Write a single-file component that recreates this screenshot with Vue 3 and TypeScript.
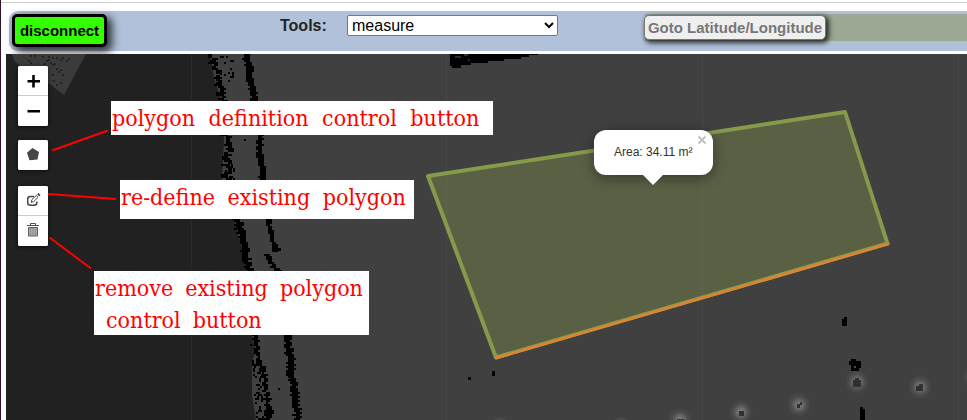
<script setup lang="ts">
import { ref } from 'vue'

type Point = [number, number]
interface Cell { x: number; y: number; w: number; h: number }

const tool = ref('measure')
const showPopup = ref(true)

// Repeatable noise in the range 0..1, keeps the scanned edges stable between renders.
const noise = (a: number, b: number): number => {
  const v = Math.sin(a * 12.9898 + b * 78.233) * 43758.5453
  return v - Math.floor(v)
}

function scanEdge(points: Point[], width: number, seed: number, ragged: number): Cell[] {
  const cells: Cell[] = []
  for (let i = 0; i < points.length - 1; i++) {
    const [y0, x0] = points[i]
    const [y1, x1] = points[i + 1]
    for (let y = y0; y < y1; y += 2) {
      const c = x0 + ((x1 - x0) * (y - y0)) / (y1 - y0)
      const w = Math.max(2, Math.round((width + (noise(y, seed) - 0.5) * ragged) / 2) * 2)
      const x = Math.round((c + (noise(y, seed + 3) - 0.5) * ragged * 0.7 - w / 2) / 2) * 2
      cells.push({ x, y, w, h: 2 })
    }
  }
  return cells
}

function scatter(x0: number, y0: number, x1: number, y1: number, density: number, slope = 0): Cell[] {
  const cells: Cell[] = []
  for (let y = y0; y < y1; y += 2) {
    for (let x = x0; x < x1; x += 2) {
      if (noise(x, y) < density) cells.push({ x: x + Math.round(slope * (y - y0)), y, w: 2, h: 2 })
    }
  }
  return cells
}

const edges: Cell[] = [
  ...scanEdge([[54, 212], [60, 214], [66, 215], [73, 220], [80, 219], [90, 221], [101, 223]], 6, 1, 7),
  ...scanEdge([[134, 226], [142, 230], [150, 228], [160, 228], [168, 230], [174, 226], [181, 227]], 6, 2, 7),
  ...scanEdge([[218, 237], [228, 240], [236, 242], [246, 244], [256, 246], [271, 250]], 8, 3, 4),
  ...scanEdge([[334, 255], [350, 258], [360, 259], [372, 264], [390, 266], [400, 268], [420, 269]], 5, 4, 5),
  ...scanEdge([[54, 247], [70, 250], [80, 251], [90, 253], [101, 254]], 7, 5, 3),
  ...scanEdge([[134, 261], [150, 259], [160, 261], [170, 263], [181, 264]], 6, 6, 3),
  ...scanEdge([[218, 270], [224, 269], [236, 272], [246, 274], [252, 277]], 5, 7, 2),
  ...scanEdge([[254, 268], [262, 271], [266, 275], [271, 278]], 6, 8, 3),
  ...scanEdge([[334, 287], [350, 289], [360, 292], [372, 291], [386, 294], [400, 296], [420, 298]], 7, 9, 4),
  ...scatter(252, 360, 262, 420, 0.4, 0.07),
  ...scatter(220, 56, 234, 82, 0.12),
  ...scatter(221, 164, 235, 180, 0.28),
  ...scatter(246, 338, 256, 350, 0.15),
  { x: 278, y: 388, w: 2, h: 2 }, { x: 288, y: 379, w: 2, h: 2 }, { x: 244, y: 139, w: 2, h: 2 }, { x: 276, y: 248, w: 5, h: 3 },
]

const specks: Cell[] = [
  [30, 55], [34, 55], [42, 56], [48, 56], [52, 57], [56, 57], [28, 60], [30, 62], [46, 60], [48, 59],
  [44, 63], [50, 62], [52, 64], [54, 63], [60, 59], [62, 57], [66, 60], [68, 58], [56, 68], [58, 71],
  [60, 69], [52, 74], [62, 74], [56, 84], [60, 82], [53, 80],
].map(([x, y]) => ({ x, y, w: 2, h: 2 }))

const glows: [number, number, number][] = [
  [857, 382, 12], [920, 387, 12], [799, 405, 12], [741, 412, 12], [680, 420, 12], [500, 427, 11], [621, 427, 11], [976, 377, 13],
]
const tileLines = [191.5, 446.5, 702.5, 958.5]
</script>

<template>
  <main class="page">
    <header class="toolbar">
      <button class="connect" type="button">disconnect</button>
      <label class="tools-label" for="tool">Tools:</label>
      <select id="tool" v-model="tool" class="tool-select">
        <option value="measure">measure</option>
      </select>
      <div class="goto-area">
        <button class="goto" type="button" disabled>Goto Latitude/Longitude</button>
      </div>
    </header>

    <section class="map">
      <svg class="canvas" viewBox="6 54 961 366" width="961" height="366">
        <defs>
          <radialGradient id="glow">
            <stop offset="0" stop-color="#808080" />
            <stop offset=".3" stop-color="#6c6c6c" />
            <stop offset=".65" stop-color="#4d4d4d" />
            <stop offset="1" stop-color="#404040" />
          </radialGradient>
        </defs>
        <rect x="6" y="54" width="961" height="366" fill="#404040" />
        <path d="M6 54H210L212 64 214 78 218 90 222 101 224 142 222 180 234 220 243 250 249 271 252 335 256 350 252 362 252 395 256 420H6Z" fill="#212121" />
        <path d="M12 54H86L64 95 56 89 46 81 48 72 35 73 20 66 14 60Z" fill="#3b3b3b" />
        <g>
          <rect v-for="(c, i) in specks" :key="'s' + i" :x="c.x" :y="c.y" :width="c.w" :height="c.h" fill="#222" />
          <rect v-for="(c, i) in edges" :key="'e' + i" :x="c.x" :y="c.y" :width="c.w" :height="c.h" fill="#000" />
        </g>
        <path d="M450 54H538V55H529V57H521V59H504V61H488V63H471V65H461V68H452V66H450Z" fill="#000" />
        <path d="M455 57h6M464 55h4M468 60h2" stroke="#3d3d3d" stroke-width="1.5" />
        <path v-for="x in tileLines" :key="x" :d="`M${x} 54V420`" stroke="#fff" stroke-opacity=".045" />

        <circle v-for="([x, y, r], i) in glows" :key="'g' + i" :cx="x" :cy="y" :r="r" fill="url(#glow)" />
        <g fill="#303030">
          <path d="M853 380h2v-2h4v2h2v7h-8z" />
          <path d="M916 386h3v-2h4v7h-7z" />
          <path d="M800 402h2v3h-2v3h-3v-4h3z" />
          <path d="M739 411h5v5h-5z" />
          <path d="M677 419h7v1h-7z" />
        </g>
        <g fill="#000">
          <path d="M842 319h2v-2h3v9h-5z" />
          <path d="M849 361h2v-2h5v2h5v7h-2v3h-8v-6h-2z" />
          <path d="M860 407h3v2h2v11h-5z" />
          <path d="M492 371h3v5h-3z" />
          <path d="M468 377h3v3h-3z" />
        </g>
        <path d="M854 366h2v2h-2z" fill="#484848" />

        <path d="M428 176 845 112 887.500 243.500 496 357.500Z" fill="#8ba04c" fill-opacity=".33" stroke="#869a4b" stroke-width="4" stroke-linejoin="round" />
        <path d="M496.500 358 888 244" stroke="#dd8432" stroke-width="2.800" stroke-linecap="round" />
      </svg>

      <div class="controls">
        <div class="control">
          <button type="button" aria-label="Zoom in">
            <svg viewBox="0 0 30 30"><path d="M9.500 15.300H22M15.500 9V21.500" stroke="#000" stroke-width="2.600" /></svg>
          </button>
          <button type="button" aria-label="Zoom out">
            <svg viewBox="0 0 30 30"><path d="M9.500 15.300H22" stroke="#000" stroke-width="2.600" /></svg>
          </button>
        </div>
        <div class="control draw">
          <button type="button" aria-label="Draw a polygon">
            <svg viewBox="0 0 30 30"><path d="M14.500 8 21 12 19.500 19.500 11.500 20.300 9 12.700Z" fill="#464646" /></svg>
          </button>
        </div>
        <div class="control edit">
          <button type="button" aria-label="Edit layers">
            <svg viewBox="0 0 30 30" fill="none">
              <path d="M16 10.500H12.500Q9.700 10.500 9.700 13.200V16.800Q9.700 19.300 12.500 19.300H16.200Q18.800 19.300 18.800 16.800V15.500" stroke="#464646" stroke-width="1.500" />
              <path d="M13.200 16.300 13.900 13.700 18.200 9.500 20 11.300 15.700 15.600Z" stroke="#464646" />
              <path d="M19.500 8.800 20.500 7.900 21.600 9 20.600 10" stroke="#464646" stroke-width="1.300" />
            </svg>
          </button>
          <button type="button" aria-label="Delete layers">
            <svg viewBox="0 0 30 30" fill="none">
              <path d="M9 9.500H21M12.500 9V7.500H17.500V9" stroke="#4d4d4d" />
              <path d="M10.500 11.500H19.500V20H10.500Z" fill="#aaa" stroke="#606060" />
              <path d="M12.500 12V19.500M15 12V19.500M17.500 12V19.500" stroke="#8b8b8b" stroke-width=".8" />
            </svg>
          </button>
        </div>
      </div>

      <div v-if="showPopup" class="popup">
        <span>Area: 34.11 m²</span>
        <button class="close" type="button" aria-label="Close" @click="showPopup = false">
          <svg viewBox="0 0 10 10"><path d="M1.500 1.500 8.500 8.500M8.500 1.500 1.500 8.500" /></svg>
        </button>
      </div>

      <svg class="leaders" viewBox="6 54 961 366" width="961" height="366">
        <path d="M52 150.500 108 130.500M48 194 116 199M49.500 237.500 91 268.500" />
      </svg>
      <p class="note define">polygon definition control button</p>
      <p class="note redefine">re-define existing polygon</p>
      <p class="note remove">remove existing polygon<br><span class="indent">control button</span></p>
    </section>
  </main>
</template>

<style>
body { margin: 0; background: #fff; overflow: hidden; }
</style>

<style scoped>
* { box-sizing: border-box; }
.page {
  width: 967px;
  height: 420px;
  padding: 2px 0 0 5px;
  border-left: 1px solid #32132b;
  background: linear-gradient(#ccc, #ccc) 0 2px / 100% 1px no-repeat #fff;
  overflow: hidden;
  font-family: "Liberation Sans", Arial, sans-serif;
}
.toolbar {
  display: flex;
  align-items: flex-start;
  height: 40px;
  margin: 9px 0 3px 3px;
  padding: 3px 0 0 3px;
  border-radius: 9px 0 0 9px;
  background: #b0c1d9;
}
.connect {
  width: 95px;
  height: 33px;
  padding: 0;
  border: 3px solid #000;
  border-radius: 5px;
  background: #33ff00;
  box-shadow: 4px 4px 8px 1px rgba(0, 0, 0, .75);
  color: #000;
  font: bold 15px "Liberation Sans", Arial, sans-serif;
}
.tools-label {
  width: 67px;
  margin: 3px 0 0 173px;
  color: #212529;
  font-size: 16px;
  font-weight: bold;
  line-height: 18px;
}
.tool-select {
  width: 211px;
  height: 21px;
  margin-top: 1px;
  padding: 0;
  border: 1px solid #767676;
  border-radius: 2px;
  background-color: #fff;
  color: #000;
  font: 16px "Liberation Sans", Arial, sans-serif;
}
.goto-area {
  flex: 1;
  height: 27px;
  margin-left: 87px;
  background: #9ca893;
}
.goto {
  display: block;
  width: 182px;
  height: 25px;
  margin: 1px 0 0 -1px;
  padding: 0;
  border: 1px solid #77776f;
  border-radius: 5px;
  background: #efefef;
  box-shadow: 2px 2px 5px 1px rgba(0, 0, 0, .75);
  color: #777;
  font: bold 15px "Liberation Sans", Arial, sans-serif;
  white-space: nowrap;
}
.map { position: relative; height: 366px; overflow: hidden; }
.canvas, .leaders { display: block; }
.leaders {
  position: absolute;
  inset: 0;
  fill: none;
  stroke: #f00;
  stroke-width: 2;
  pointer-events: none;
}
.controls { position: absolute; top: 12px; left: 12px; width: 30px; }
.control {
  border-radius: 2px;
  background: #fff;
  box-shadow: 0 1px 4px rgba(0, 0, 0, .65);
  overflow: hidden;
}
.control button {
  display: block;
  width: 30px;
  height: 30px;
  padding: 0;
  border: 0;
  background: #fff;
  overflow: hidden;
}
.control button:not(:last-child) { border-bottom: 1px solid #ccc; }
.control svg { display: block; width: 30px; height: 30px; }
.draw { margin-top: 14px; }
.edit { margin-top: 16px; }
.popup {
  position: absolute;
  left: 588px;
  top: 76px;
  width: 119px;
  height: 45px;
  padding: 14px 0 0 20px;
  border-radius: 12px;
  background: #fff;
  box-shadow: 0 3px 14px rgba(0, 0, 0, .4);
  color: #333;
  font-size: 12px;
  line-height: 17px;
  white-space: nowrap;
}
.popup::after {
  content: "";
  position: absolute;
  left: 48px;
  top: 44px;
  border: solid transparent;
  border-width: 11px 11px 0;
  border-top-color: #fff;
}
.close {
  position: absolute;
  top: 5px;
  right: 6px;
  width: 10px;
  height: 10px;
  padding: 0;
  border: 0;
  background: none;
}
.close svg { display: block; stroke: #c3c3c3; stroke-width: 2; }
.note {
  position: absolute;
  margin: 0;
  background: #fff;
  color: #f00;
  font: 23px/32px "DejaVu Serif Condensed", "DejaVu Serif", serif;
  font-stretch: condensed;
  word-spacing: 5.5px;
  white-space: nowrap;
}
.define { left: 105px; top: 47px; width: 382px; height: 34px; padding: 1px 0 0 1px; word-spacing: 7px; }
.redefine { left: 114px; top: 126px; width: 294px; height: 39px; padding: 1px 0 0 1px; word-spacing: 6px; }
.remove { left: 88px; top: 217px; width: 275px; height: 64px; padding: 1px 0 0 1px; }
.indent { padding-left: 11px; }
</style>
